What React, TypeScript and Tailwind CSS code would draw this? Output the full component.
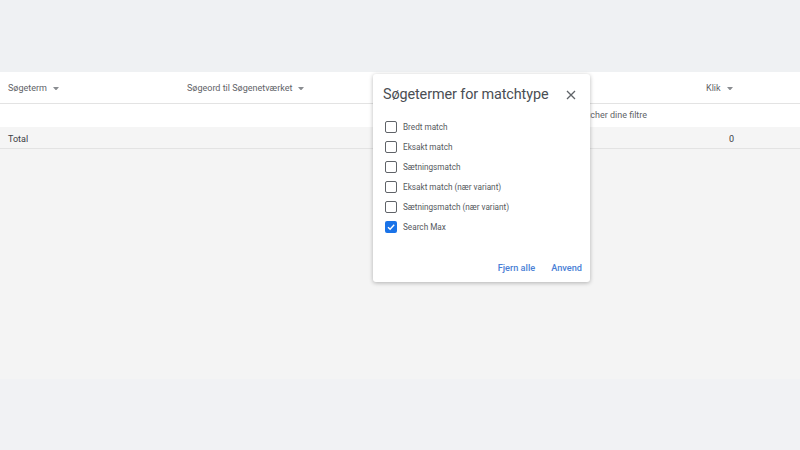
import React from "react";

const Caret = () => (
  <svg width="6" height="3.5" viewBox="0 0 6 3.5" className="ml-[6px] mt-[0px]">
    <path d="M0 0 L6 0 L3 3.5 Z" fill="#8a8d91" />
  </svg>
);

const Box = ({ checked }: { checked?: boolean }) =>
  checked ? (
    <div className="w-[12px] h-[12px] rounded-[2px] bg-[#1a73e8] flex items-center justify-center">
      <svg width="10" height="10" viewBox="0 0 10 10">
        <path d="M2 5.2 L4.1 7.2 L8.2 2.8" stroke="#fff" strokeWidth="1.4" fill="none" />
      </svg>
    </div>
  ) : (
    <div className="w-[12px] h-[12px] rounded-[2px] border-[1.5px] border-[#5f6368] bg-white" />
  );

const items = [
  "Bredt match",
  "Eksakt match",
  "Sætningsmatch",
  "Eksakt match (nær variant)",
  "Sætningsmatch (nær variant)",
  "Search Max",
];

export default function App() {
  return (
    <div
      className="relative w-[800px] h-[450px] bg-[#f4f4f4] overflow-hidden"
      style={{ fontFamily: "Roboto, 'Liberation Sans', sans-serif" }}
    >
      <div className="h-[72px] bg-[#eff1f3]" />
      <div className="bg-white">
        <div className="h-[32px] flex items-center pt-[2px] border-b border-[#e3e3e3] text-[9px] text-[#5f6368]">
          <div className="w-[187px] pl-[8px] flex items-center">
            Søgeterm
            <Caret />
          </div>
          <div className="w-[519px] flex items-center">
            Søgeord til Søgenetværket
            <Caret />
          </div>
          <div className="flex items-center">
            Klik
            <Caret />
          </div>
        </div>
        <div className="h-[23px] flex items-center pt-[1px] text-[9px] text-[#5f6368]">
          <div className="pl-[530px]">Ingen data matcher dine filtre</div>
        </div>
        <div className="h-[22px] flex items-center pt-[4px] bg-[#f5f5f5] border-b border-[#e3e3e3] text-[9px] text-[#3c4043]">
          <div className="w-[729px] pl-[8px]">Total</div>
          <div>0</div>
        </div>
      </div>
      <div className="h-[230px]" />
      <div className="h-[72px] bg-[#f1f2f4]" />

      <div className="absolute left-[373px] top-[74px] w-[217px] h-[208px] bg-white rounded-[3px] shadow-[0_1px_4px_rgba(0,0,0,0.28)] flex flex-col">
        <div className="h-[40px] flex items-center justify-between pl-[10px] pr-[14px] pt-[1px]">
          <span className="text-[14.4px] text-[#4a4e53] tracking-[-0.1px]">Søgetermer for matchtype</span>
          <svg width="10" height="10" viewBox="0 0 10 10">
            <path d="M1 1 L9 9 M9 1 L1 9" stroke="#5f6368" strokeWidth="1.3" />
          </svg>
        </div>
        <div className="flex flex-col pt-[3px]">
          {items.map((t, i) => (
            <div key={t} className="h-[20px] flex items-center pl-[12px]">
              <Box checked={i === 5} />
              <span className="ml-[6px] text-[8.2px] text-[#55595e]">{t}</span>
            </div>
          ))}
        </div>
        <div className="flex-1" />
        <div className="h-[21px] flex items-start justify-end pr-[8px] gap-[16px] text-[9.2px] text-[#4a7fd6] font-medium">
          <span>Fjern alle</span>
          <span>Anvend</span>
        </div>
      </div>
    </div>
  );
}
